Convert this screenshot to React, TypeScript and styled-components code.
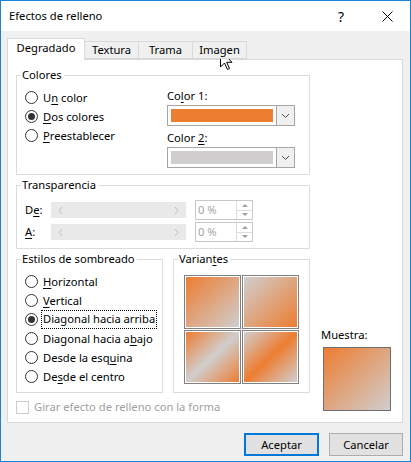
import React from 'react';
import styled, { createGlobalStyle } from 'styled-components';

const ORANGE = '#ed7d31';
const GREY = '#d0cece';

const GlobalStyle = createGlobalStyle`
    html, body {
        margin: 0;
        padding: 0;
        background: #f0f0f0;
    }
    body {
        font-family: 'Noto Sans', 'Segoe UI', Arial, sans-serif;
        font-size: 11.2px;
        color: #000;
    }
`;

const Window = styled.div`
    position: relative;
    width: 411px;
    height: 462px;
    box-sizing: border-box;
    border: 1px solid #1883d7;
    background: #f0f0f0;
    display: flex;
    flex-direction: column;
    overflow: hidden;
`;

const TitleBar = styled.div`
    height: 30px;
    background: #fff;
    display: flex;
    align-items: center;
    padding-left: 8px;
    flex-shrink: 0;
`;

const Title = styled.div`
    flex: 1;
    font-size: 11.2px;
    line-height: 16px;
`;

const TitleButton = styled.div`
    width: 46px;
    height: 30px;
    display: flex;
    align-items: center;
    justify-content: center;
    font-size: 14px;
`;

const Body = styled.div`
    flex: 1;
    display: flex;
    flex-direction: column;
    padding: 7px 7px 0 6px;
`;

const TabRow = styled.div`
    display: flex;
    align-items: flex-end;
    height: 21px;
    position: relative;
    z-index: 1;
`;

const Tab = styled.div<{ $active?: boolean; $w: number }>`
    box-sizing: border-box;
    width: ${p => p.$w}px;
    height: ${p => (p.$active ? 22 : 18)}px;
    margin-left: -1px;
    margin-bottom: ${p => (p.$active ? -1 : 0)}px;
    border: 1px solid #d9d9d9;
    border-bottom: ${p => (p.$active ? 'none' : '1px solid #d9d9d9')};
    background: ${p => (p.$active ? '#fff' : '#f0f0f0')};
    display: flex;
    align-items: center;
    justify-content: center;
    padding-bottom: ${p => (p.$active ? 3 : 0)}px;
    line-height: 16px;
    &:first-child {
        margin-left: 0;
    }
`;

const Panel = styled.div`
    box-sizing: border-box;
    height: 364px;
    background: #fff;
    border: 1px solid #d9d9d9;
    display: grid;
    grid-template-columns: 294px 1fr;
    padding: 7px 0 0 8px;
`;

const LeftCol = styled.div`
    display: flex;
    flex-direction: column;
`;

const Group = styled.fieldset<{ $h: number; $w?: number }>`
    box-sizing: border-box;
    margin: 0;
    padding: 0;
    min-width: 0;
    height: ${p => p.$h}px;
    width: ${p => (p.$w ? `${p.$w}px` : 'auto')};
    border: 1px solid #dcdcdc;
`;

const Legend = styled.legend`
    margin-left: 4px;
    padding: 0 2px 0 1px;
    line-height: 16px;
`;

const ColorsBody = styled.div`
    display: grid;
    grid-template-columns: 142px 128px;
    padding: 5px 0 0 8px;
`;

const RadioList = styled.div`
    display: flex;
    flex-direction: column;
`;

const RadioRow = styled.div`
    height: 19px;
    display: flex;
    align-items: center;
    gap: 5px;
    line-height: 16px;
    white-space: nowrap;
`;

const RadioCircle = styled.span<{ $on?: boolean }>`
    box-sizing: border-box;
    width: 13px;
    height: 13px;
    border-radius: 50%;
    border: 1px solid #333;
    background: #fff;
    display: flex;
    align-items: center;
    justify-content: center;
    flex-shrink: 0;
    &::after {
        content: '';
        display: ${p => (p.$on ? 'block' : 'none')};
        width: 7px;
        height: 7px;
        border-radius: 50%;
        background: #333;
    }
`;

const Focus = styled.span`
    outline: 1px dotted #000;
    padding: 0 1px 1px;
    margin-left: -1px;
    line-height: 16px;
`;

const U = styled.u`
    text-decoration-thickness: 1px;
    text-underline-offset: 2px;
`;

const ColorPickers = styled.div`
    display: flex;
    flex-direction: column;
`;

const FieldLabel = styled.div<{ $top?: number }>`
    line-height: 16px;
    margin-top: ${p => p.$top ?? 0}px;
    margin-bottom: 1px;
`;

const Dropdown = styled.div`
    box-sizing: border-box;
    height: 21px;
    width: 128px;
    border: 1px solid #a6a6a6;
    display: flex;
    background: #fff;
`;

const Swatch = styled.div<{ $color: string }>`
    flex: 1;
    margin: 3px;
    background: ${p => p.$color};
`;

const DropArrow = styled.div`
    width: 17px;
    border-left: 1px solid #a6a6a6;
    background: #f0f0f0;
    display: flex;
    align-items: center;
    justify-content: center;
`;

const TransBody = styled.div`
    display: flex;
    flex-direction: column;
    gap: 2px;
    padding: 7px 0 0 8px;
`;

const TransRow = styled.div`
    display: flex;
    align-items: center;
    height: 20px;
`;

const TransLabel = styled.div`
    width: 26px;
    line-height: 16px;
`;

const Slider = styled.div`
    width: 135px;
    height: 16px;
    background: #e9e9e9;
    display: flex;
    align-items: center;
    justify-content: space-between;
    padding: 0 6px;
    box-sizing: border-box;
`;

const Spin = styled.div`
    box-sizing: border-box;
    margin-left: 9px;
    width: 58px;
    height: 20px;
    border: 1px solid #c8c8c8;
    display: flex;
    background: #fff;
`;

const SpinText = styled.div`
    flex: 1;
    color: #a3a3a3;
    padding-left: 2px;
    line-height: 18px;
`;

const SpinArrows = styled.div`
    width: 15px;
    border-left: 1px solid #dcdcdc;
    display: flex;
    flex-direction: column;
`;

const SpinHalf = styled.div<{ $top?: boolean }>`
    flex: 1;
    display: flex;
    align-items: center;
    justify-content: center;
    border-bottom: ${p => (p.$top ? '1px solid #dcdcdc' : 'none')};
`;

const Tri = styled.span<{ $up?: boolean }>`
    width: 0;
    height: 0;
    border-left: 3px solid transparent;
    border-right: 3px solid transparent;
    ${p => (p.$up ? 'border-bottom: 3px solid #a0a0a0;' : 'border-top: 3px solid #a0a0a0;')}
`;

const StyleRow = styled.div`
    display: flex;
    gap: 10px;
    margin-top: 2px;
`;

const StylesBody = styled.div`
    padding: 5px 0 0 8px;
    display: flex;
    flex-direction: column;
`;

const VariantGrid = styled.div`
    display: grid;
    grid-template-columns: 57px 57px;
    grid-auto-rows: 54px;
    gap: 1px;
    padding: 8px 0 0 10px;
`;

const Variant = styled.div<{ $bg: string }>`
    box-sizing: border-box;
    border: 1px solid #808080;
    padding: 1px;
    background: #fff;
    &::after {
        content: '';
        display: block;
        width: 100%;
        height: 100%;
        background: ${p => p.$bg};
    }
`;

const CheckRow = styled.div`
    display: flex;
    align-items: center;
    gap: 5px;
    margin-top: 6px;
    color: #a0a0a0;
    line-height: 16px;
`;

const CheckBox = styled.span`
    box-sizing: border-box;
    width: 13px;
    height: 13px;
    border: 1px solid #cccccc;
    background: #fff;
`;

const SampleCol = styled.div`
    align-self: end;
    margin: 0 0 11px 11px;
    display: flex;
    flex-direction: column;
`;

const SampleLabel = styled.div`
    line-height: 16px;
    margin-bottom: 4px;
`;

const SampleBox = styled.div`
    box-sizing: border-box;
    width: 68px;
    height: 64px;
    margin-left: 2px;
    border: 1px solid #6e6e6e;
    background: linear-gradient(to bottom right, ${ORANGE}, ${GREY});
`;

const Footer = styled.div`
    display: flex;
    justify-content: flex-end;
    gap: 10px;
    margin-top: 10px;
`;

const Button = styled.div<{ $primary?: boolean }>`
    box-sizing: border-box;
    width: ${p => (p.$primary ? 75 : 74)}px;
    height: 23px;
    background: #e1e1e1;
    border: ${p => (p.$primary ? '2px solid #0078d7' : '1px solid #adadad')};
    display: flex;
    align-items: center;
    justify-content: center;
    line-height: 16px;
`;

const Cursor = styled.svg`
    position: absolute;
    left: 219px;
    top: 49px;
`;

const Chevron = ({ dir }: { dir: 'left' | 'right' | 'down' }) => {
    const d =
        dir === 'left' ? 'M5 1 L2 4.5 L5 8' : dir === 'right' ? 'M2 1 L5 4.5 L2 8' : 'M1 2 L4.5 5.5 L8 2';
    return (
        <svg width={dir === 'down' ? 9 : 7} height={9} viewBox={dir === 'down' ? '0 0 9 7' : '0 0 7 9'}>
            <path d={d} fill="none" stroke={dir === 'down' ? '#505050' : '#bdbdbd'} strokeWidth={1} />
        </svg>
    );
};

const variants = [
    `linear-gradient(to bottom right, ${ORANGE}, ${GREY})`,
    `linear-gradient(to bottom right, ${GREY}, ${ORANGE})`,
    `linear-gradient(to bottom right, ${ORANGE}, ${GREY} 50%, ${ORANGE})`,
    `linear-gradient(to bottom right, ${GREY}, ${ORANGE} 50%, ${GREY})`,
];

const Radio = ({ on, children }: { on?: boolean; children: React.ReactNode }) => (
    <RadioRow>
        <RadioCircle $on={on} />
        {children}
    </RadioRow>
);

const TransparencyRow = ({ label }: { label: React.ReactNode }) => (
    <TransRow>
        <TransLabel>{label}</TransLabel>
        <Slider>
            <Chevron dir="left" />
            <Chevron dir="right" />
        </Slider>
        <Spin>
            <SpinText>0 %</SpinText>
            <SpinArrows>
                <SpinHalf $top>
                    <Tri $up />
                </SpinHalf>
                <SpinHalf>
                    <Tri />
                </SpinHalf>
            </SpinArrows>
        </Spin>
    </TransRow>
);

const App = () => (
    <>
        <GlobalStyle />
        <Window>
            <TitleBar>
                <Title>Efectos de relleno</Title>
                <TitleButton>?</TitleButton>
                <TitleButton>
                    <svg width="11" height="11" viewBox="0 0 11 11">
                        <path d="M0.5 0.5 L10.5 10.5 M10.5 0.5 L0.5 10.5" stroke="#000" strokeWidth={1} />
                    </svg>
                </TitleButton>
            </TitleBar>
            <Body>
                <TabRow>
                    <Tab $active $w={78}>Degradado</Tab>
                    <Tab $w={55}>Textura</Tab>
                    <Tab $w={55}>Trama</Tab>
                    <Tab $w={55}>Imagen</Tab>
                </TabRow>
                <Panel>
                    <LeftCol>
                        <Group $h={108}>
                            <Legend>Colores</Legend>
                            <ColorsBody>
                                <RadioList>
                                    <Radio>
                                        <span>
                                            U<U>n</U> color
                                        </span>
                                    </Radio>
                                    <Radio on>
                                        <span>
                                            <U>D</U>os colores
                                        </span>
                                    </Radio>
                                    <Radio>
                                        <span>
                                            <U>P</U>reestablecer
                                        </span>
                                    </Radio>
                                </RadioList>
                                <ColorPickers>
                                    <FieldLabel>
                                        Co<U>l</U>or 1:
                                    </FieldLabel>
                                    <Dropdown>
                                        <Swatch $color={ORANGE} />
                                        <DropArrow>
                                            <Chevron dir="down" />
                                        </DropArrow>
                                    </Dropdown>
                                    <FieldLabel $top={4}>
                                        Color <U>2</U>:
                                    </FieldLabel>
                                    <Dropdown>
                                        <Swatch $color={GREY} />
                                        <DropArrow>
                                            <Chevron dir="down" />
                                        </DropArrow>
                                    </Dropdown>
                                </ColorPickers>
                            </ColorsBody>
                        </Group>
                        <Group $h={72} style={{ marginTop: 2 }}>
                            <Legend>Transparencia</Legend>
                            <TransBody>
                                <TransparencyRow
                                    label={
                                        <>
                                            D<U>e</U>:
                                        </>
                                    }
                                />
                                <TransparencyRow
                                    label={
                                        <>
                                            <U>A</U>:
                                        </>
                                    }
                                />
                            </TransBody>
                        </Group>
                        <StyleRow>
                            <Group $h={142} $w={147}>
                                <Legend>Estilos de sombreado</Legend>
                                <StylesBody>
                                    <Radio>
                                        <span>
                                            <U>H</U>orizontal
                                        </span>
                                    </Radio>
                                    <Radio>
                                        <span>
                                            <U>V</U>ertical
                                        </span>
                                    </Radio>
                                    <Radio on>
                                        <Focus>Diagonal hacia arriba</Focus>
                                    </Radio>
                                    <Radio>
                                        <span>
                                            Diagonal hacia a<U>b</U>ajo
                                        </span>
                                    </Radio>
                                    <Radio>
                                        <span>
                                            Desde la esq<U>u</U>ina
                                        </span>
                                    </Radio>
                                    <Radio>
                                        <span>
                                            De<U>s</U>de el centro
                                        </span>
                                    </Radio>
                                </StylesBody>
                            </Group>
                            <Group $h={142} $w={137}>
                                <Legend>
                                    Varian<U>t</U>es
                                </Legend>
                                <VariantGrid>
                                    {variants.map(v => (
                                        <Variant key={v} $bg={v} />
                                    ))}
                                </VariantGrid>
                            </Group>
                        </StyleRow>
                        <CheckRow>
                            <CheckBox />
                            Girar efecto de relleno con la forma
                        </CheckRow>
                    </LeftCol>
                    <SampleCol>
                        <SampleLabel>Muestra:</SampleLabel>
                        <SampleBox />
                    </SampleCol>
                </Panel>
                <Footer>
                    <Button $primary>Aceptar</Button>
                    <Button>Cancelar</Button>
                </Footer>
            </Body>
            <Cursor width="13" height="21" viewBox="0 0 13 21">
                <path
                    d="M0.5 0.5 L0.5 17 L4.5 13 L7.5 19.5 L9.5 18.5 L6.7 12.3 L12 12.3 Z"
                    fill="#fff"
                    stroke="#000"
                    strokeWidth={1}
                    strokeLinejoin="round"
                />
            </Cursor>
        </Window>
    </>
);

export default App;
